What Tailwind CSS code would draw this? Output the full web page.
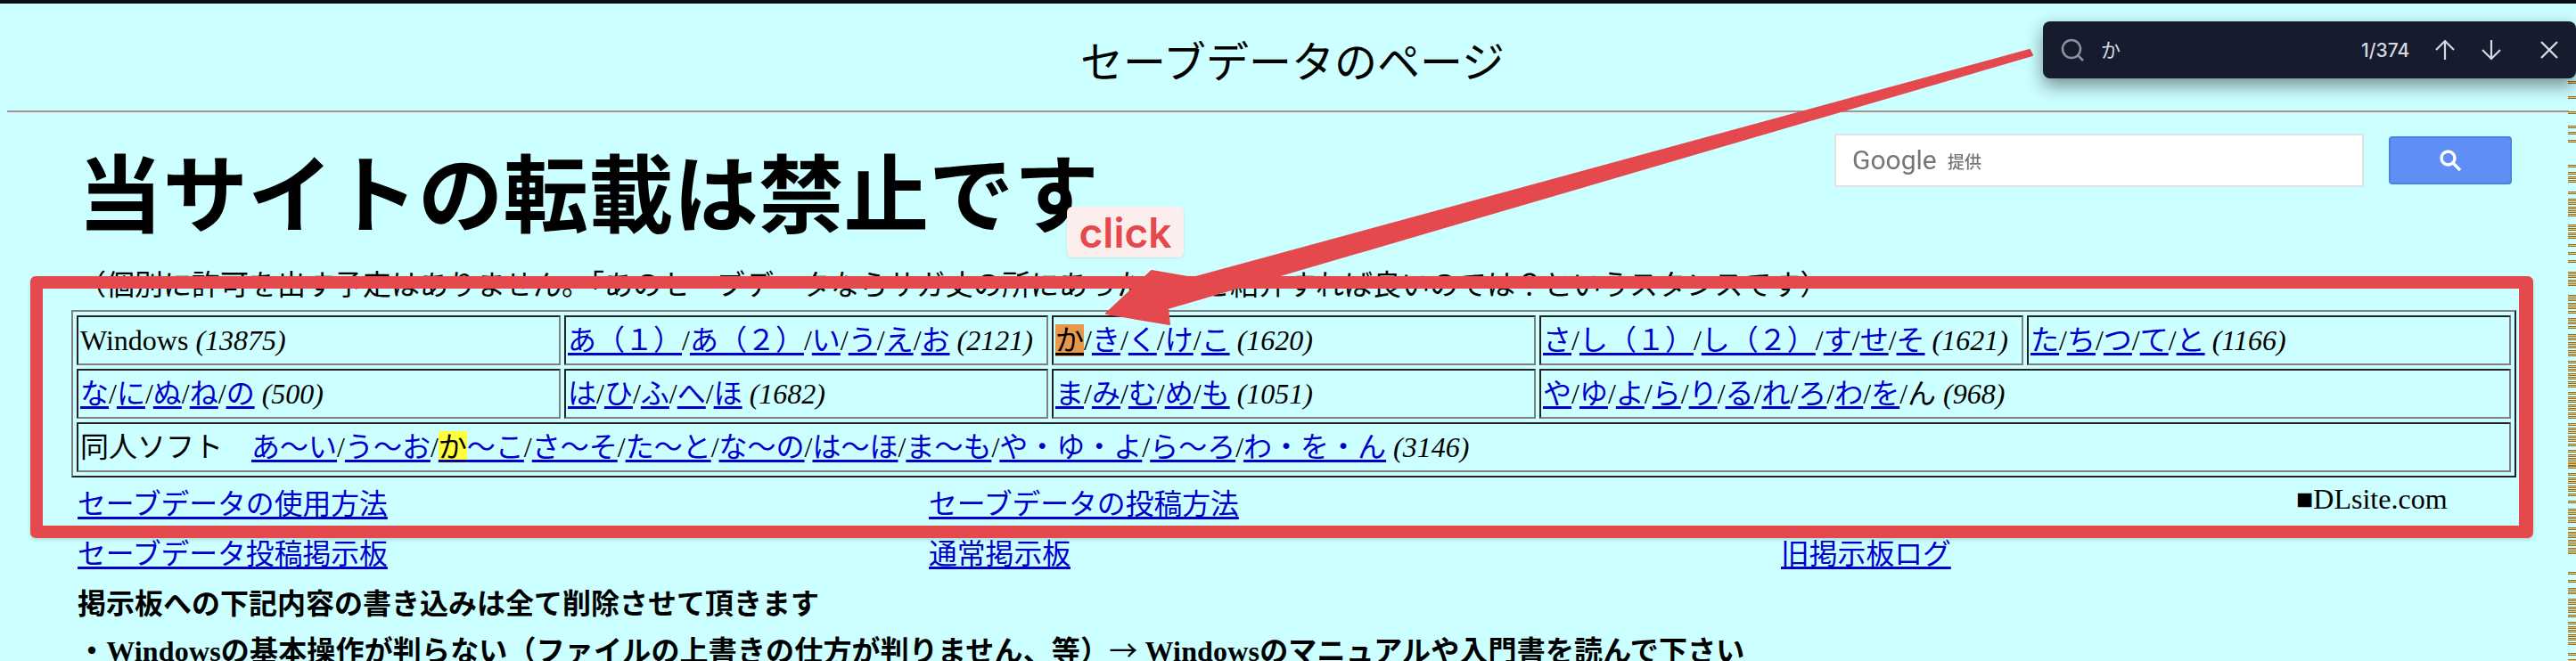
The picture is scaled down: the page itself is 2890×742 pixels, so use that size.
<!DOCTYPE html>
<html lang="ja">
<head>
    <meta charset="UTF-8">
    <title>セーブデータのページ</title>
    <script src="https://cdn.jsdelivr.net/npm/@tailwindcss/browser@4"></script>
</head>
<body class="relative w-[2890px] h-[742px] overflow-hidden bg-[#ccffff] text-black text-[32px] font-['Liberation_Serif','Noto_Sans_CJK_JP',serif]">
    <div class="h-[4px] bg-[#0a0f14]"></div>

    <header class="h-[120px] flex items-center justify-center text-[48px] leading-none pt-[14px] pl-[10px]">セーブデータのページ</header>
    <hr class="mx-[8px] h-[3px] border-0 border-t-2 border-b border-t-[#999999] border-b-[#eeeeee]">

    <section class="h-[173px] flex justify-between pl-[87px] pr-[72px]">
        <h1 class="mt-[39px] text-[95.5px] leading-[112px] font-bold">当サイトの転載は禁止です</h1>
        <div class="flex gap-[28px] pt-[23px]">
            <div class="w-[594px] h-[60px] bg-white border-2 border-[#dfe1e5] flex items-center pl-[18px] gap-[13px] text-[#757575] font-['Roboto',sans-serif]">
                <span class="w-[94px] text-[30px] leading-none font-normal blur-[0.5px]">Google</span>
                <span class="text-[19px] leading-none font-['Noto_Sans_CJK_JP',sans-serif] font-medium blur-[0.5px]">提供</span>
            </div>
            <div class="w-[138px] h-[54px] mt-[3px] bg-[#5f8ff5] border-2 border-[#4d7fe8] rounded-[4px] flex items-center justify-center">
                <svg class="w-[28px] h-[28px]" viewBox="0 0 28 28" fill="none" stroke="white" stroke-width="3.4">
                    <circle cx="11.5" cy="11.5" r="7.5"/><path d="M17 17l8 8"/>
                </svg>
            </div>
        </div>
    </section>

    <p class="h-[48px] pl-[87px] pt-[2px] text-[32px] leading-[36px]">（個別に許可を出す予定はありません。「あのセーブデータならサガ丈の所にあったよ」と紹介すれば良いのでは？というスタンスです）</p>

    <div class="pl-[80px]">
        <table class="table-fixed w-[2743px] border-separate border-spacing-[4px] border-2 border-t-[#808080] border-l-[#808080] border-r-[#222222] border-b-[#222222] [&_td]:h-[56px] [&_td]:px-[2px] [&_td]:py-0 [&_td]:border-2 [&_td]:border-t-[#222222] [&_td]:border-l-[#222222] [&_td]:border-r-[#808080] [&_td]:border-b-[#808080] [&_td]:whitespace-nowrap [&_a]:text-[#0000cc] [&_a]:underline [&_a]:decoration-[3px] [&_a]:underline-offset-[3px]">
            <tr>
                <td>Windows <i>(13875)</i></td>
                <td><a href="#">あ（１）</a>/<a href="#">あ（２）</a>/<a href="#">い</a>/<a href="#">う</a>/<a href="#">え</a>/<a href="#">お</a> <i>(2121)</i></td>
                <td><span class="bg-[#e8984a] underline decoration-[3px] underline-offset-[3px]">か</span>/<a href="#">き</a>/<a href="#">く</a>/<a href="#">け</a>/<a href="#">こ</a> <i>(1620)</i></td>
                <td><a href="#">さ</a>/<a href="#">し（１）</a>/<a href="#">し（２）</a>/<a href="#">す</a>/<a href="#">せ</a>/<a href="#">そ</a> <i>(1621)</i></td>
                <td><a href="#">た</a>/<a href="#">ち</a>/<a href="#">つ</a>/<a href="#">て</a>/<a href="#">と</a> <i>(1166)</i></td>
            </tr>
            <tr>
                <td><a href="#">な</a>/<a href="#">に</a>/<a href="#">ぬ</a>/<a href="#">ね</a>/<a href="#">の</a> <i>(500)</i></td>
                <td><a href="#">は</a>/<a href="#">ひ</a>/<a href="#">ふ</a>/<a href="#">へ</a>/<a href="#">ほ</a> <i>(1682)</i></td>
                <td><a href="#">ま</a>/<a href="#">み</a>/<a href="#">む</a>/<a href="#">め</a>/<a href="#">も</a> <i>(1051)</i></td>
                <td colspan="2"><a href="#">や</a>/<a href="#">ゆ</a>/<a href="#">よ</a>/<a href="#">ら</a>/<a href="#">り</a>/<a href="#">る</a>/<a href="#">れ</a>/<a href="#">ろ</a>/<a href="#">わ</a>/<a href="#">を</a>/ん <i>(968)</i></td>
            </tr>
            <tr>
                <td colspan="5">同人ソフト　<a href="#">あ～い</a>/<a href="#">う～お</a>/<a href="#"><span class="bg-[#ffff3c] text-black decoration-black">か</span>～こ</a>/<a href="#">さ～そ</a>/<a href="#">た～と</a>/<a href="#">な～の</a>/<a href="#">は～ほ</a>/<a href="#">ま～も</a>/<a href="#">や・ゆ・よ</a>/<a href="#">ら～ろ</a>/<a href="#">わ・を・ん</a> <i>(3146)</i></td>
            </tr>
        </table>
    </div>

    <div class="mt-[3px] pl-[87px] grid grid-cols-[955px_956px_1fr] auto-rows-[56px] items-center text-[31.8px] [&_a]:text-[#0000cc] [&_a]:underline [&_a]:decoration-[3px] [&_a]:underline-offset-[3px]">
        <div><a href="#">セーブデータの使用方法</a></div>
        <div><a href="#">セーブデータの投稿方法</a></div>
        <div class="pl-[578px] pb-[14px] text-[32px]">■DLsite.com</div>
        <div><a href="#">セーブデータ投稿掲示板</a></div>
        <div><a href="#">通常掲示板</a></div>
        <div><a href="#">旧掲示板ログ</a></div>
    </div>

    <div class="mt-[2px] pl-[87px] font-bold leading-[50px]">
        <p>掲示板への下記内容の書き込みは全て削除させて頂きます</p>
        <p class="tracking-[0.17px]">・Windowsの基本操作が判らない（ファイルの上書きの仕方が判りません、等）<span class="font-['Noto_Sans_CJK_JP',sans-serif] font-normal">→</span> Windowsのマニュアルや入門書を読んで下さい</p>
    </div>

    <!-- annotation overlay -->
    <div class="absolute left-[34px] top-[310px] w-[2808px] h-[294px] border-[14px] border-r-[16px] border-[#e4494d] rounded-[6px] shadow-[0_2px_4px_rgba(0,0,0,0.15)]"></div>
    <svg class="absolute left-0 top-0 w-[2890px] h-[742px]" viewBox="0 0 2890 742">
        <polygon points="2277,56 2280,62 1310,346 1312,364 1241,352 1292,304 1338,312" fill="#e4494d" stroke="#e4494d" stroke-width="2" stroke-linejoin="round"/>
    </svg>
    <div class="absolute left-[1197px] top-[232px] w-[131px] h-[57px] flex items-center justify-center rounded-[6px] bg-[#fdeeee] shadow-[0_1px_3px_rgba(0,0,0,0.1)] text-[#e4494d] text-[46px] leading-none font-semibold font-['Inter',sans-serif]">click</div>

    <!-- scrollbar match marks -->
    <div id="marks" class="absolute right-0 top-0 w-[9px] h-[742px]"></div>

    <!-- find in page -->
    <div class="absolute left-[2292px] top-[24px] w-[598px] h-[64px] bg-[#161c2e] rounded-[8px] shadow-[0_8px_20px_rgba(0,0,0,0.45)] flex items-center pl-[20px] text-[#d5d8e0] font-['Inter','Noto_Sans_CJK_JP',sans-serif]">
        <svg class="w-[27px] h-[27px] text-[#8b8f9b]" viewBox="0 0 27 27" fill="none" stroke="currentColor" stroke-width="2.6">
            <circle cx="12" cy="12" r="10"/><path d="M19 19l6 6"/>
        </svg>
        <span class="ml-[18px] text-[22px] leading-none">か</span>
        <span class="ml-[270px] text-[21px] leading-none font-medium">1/374</span>
        <svg class="ml-[28px] w-[24px] h-[24px]" viewBox="0 0 24 24" fill="none" stroke="currentColor" stroke-width="2.2">
            <path d="M12 23V2M2 12L12 2l10 10"/>
        </svg>
        <svg class="ml-[28px] w-[24px] h-[24px]" viewBox="0 0 24 24" fill="none" stroke="currentColor" stroke-width="2.2">
            <path d="M12 1v21M2 12l10 10 10-10"/>
        </svg>
        <svg class="ml-[42px] w-[22px] h-[22px]" viewBox="0 0 22 22" fill="none" stroke="currentColor" stroke-width="2.4">
            <path d="M2 2l18 18M20 2L2 20"/>
        </svg>
    </div>

    <script>
        // y positions of the find-in-page hits on the scrollbar
        const marks = [92,109,126,142,149,158,186,194,199,203,216,224,228,233,237,241,253,257,262,266,275,284,293,
            306,310,315,319,332,336,341,345,350,358,362,367,376,380,385,389,394,398,406,411,415,420,424,429,433,441,446,450,455,459,464,468,
            476,481,485,490,494,499,506,511,515,519,
            521,524,532,537,541,546,550,555,563,572,576,581,585,593,598,602,607,611,616,620,643,652,661,665,673,677,682,686,691,699,704,708,713,717,722,734,741];
        const box = document.getElementById('marks');
        marks.forEach(y => {
            const m = document.createElement('div');
            m.className = 'absolute left-0 w-[9px] h-[3px] bg-[#f3c66e] border-y border-[#8f6f2c]';
            m.style.top = (y - 1) + 'px';
            box.appendChild(m);
        });
    </script>
</body>
</html>
